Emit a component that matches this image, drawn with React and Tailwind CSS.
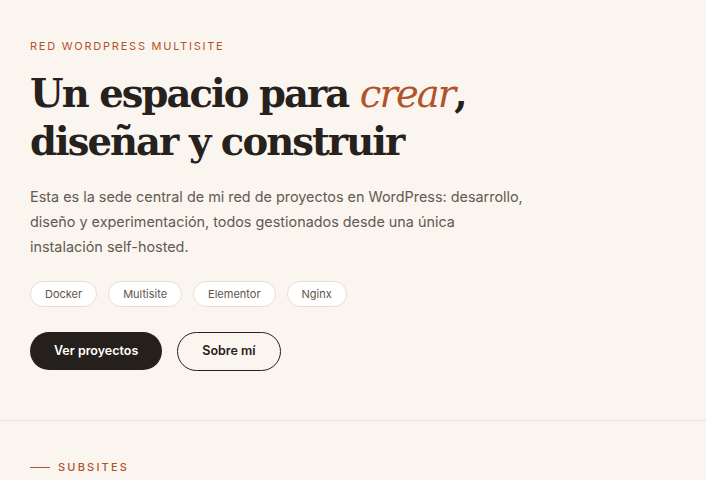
import React from 'react';

const tags = ['Docker', 'Multisite', 'Elementor', 'Nginx'];

export default function App() {
  return (
    <div className="min-h-screen bg-[#faf5ef] font-['Inter',sans-serif]">
      {/* Hero */}
      <section className="px-[30px] pt-[39px] pb-[49px] border-b border-[#ebe1d6]">
        <p className="text-[11px] leading-[14px] tracking-[0.16em] text-[#b3532b] uppercase">
          Red WordPress Multisite
        </p>
        <h1 className="mt-[17px] font-['DejaVu_Serif',serif] font-bold text-[38.5px] leading-[48px] tracking-[-0.05em] text-[#26211c]">
          Un espacio para <em className="font-normal text-[#b3532b]">crear</em>,<br />
          diseñar y construir
        </h1>
        <p className="mt-[18px] max-w-[500px] text-[14.4px] leading-[25px] text-[#625a51]">
          Esta es la sede central de mi red de proyectos en WordPress: desarrollo, diseño y
          experimentación, todos gestionados desde una única instalación self-hosted.
        </p>
        <div className="mt-[22px] flex gap-[11px]">
          {tags.map((t) => (
            <span
              key={t}
              className="h-[26px] px-[14px] flex items-center rounded-full border border-[#e9dfd1] bg-white text-[11px] text-[#5e554c]"
            >
              {t}
            </span>
          ))}
        </div>
        <div className="mt-[25px] flex gap-[15px]">
          <button className="h-[38px] px-[24px] rounded-full bg-[#25201b] text-white text-[12.5px] font-semibold">
            Ver proyectos
          </button>
          <button className="h-[39px] px-[24px] rounded-full border border-[#25201b] text-[#25201b] text-[12.5px] font-semibold">
            Sobre mí
          </button>
        </div>
      </section>

      {/* Subsites */}
      <section className="px-[30px] pt-[38px]">
        <div className="flex items-center gap-[8px]">
          <span className="w-[20px] h-px bg-[#b3532b]" />
          <span className="text-[11px] tracking-[0.2em] text-[#b3532b] uppercase font-medium">
            Subsites
          </span>
        </div>
      </section>
    </div>
  );
}
